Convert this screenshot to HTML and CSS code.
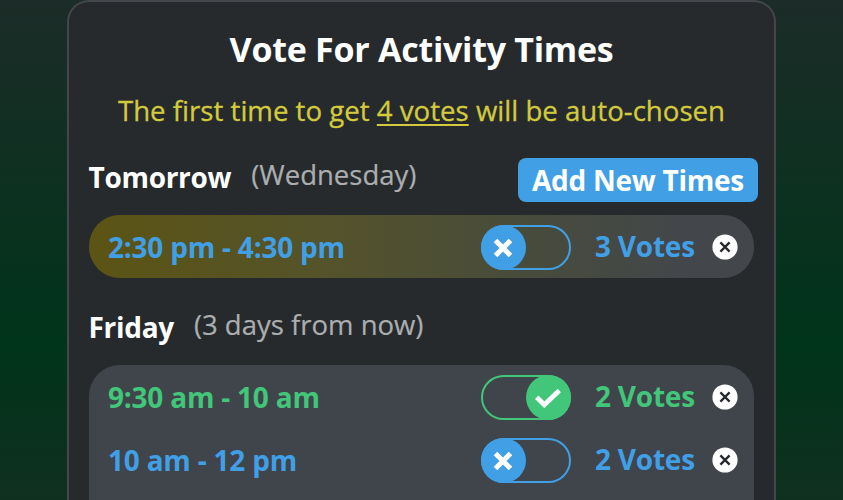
FILE: index.html
```html
<!DOCTYPE html>
<html lang="en">
<head>
<meta charset="utf-8">
<title>Vote For Activity Times</title>
<link rel="stylesheet" href="styles.css">
</head>
<body>
<svg class="defs" width="0" height="0" aria-hidden="true">
  <symbol id="cross" viewBox="0 0 20 20"><path d="M2.5 2.5 17.5 17.5M17.5 2.5 2.5 17.5" fill="none" stroke="currentColor" stroke-width="5"/></symbol>
  <symbol id="check" viewBox="0 0 26 20"><path d="M1.7 9.2 9.3 16.8 24.3 2.4" fill="none" stroke="currentColor" stroke-width="4.8"/></symbol>
  <symbol id="remove" viewBox="0 0 26 26"><circle cx="13" cy="13" r="12.6" fill="#fff"/><path d="M8.4 8.4 17.6 17.6M17.6 8.4 8.4 17.6" fill="none" stroke="#25282c" stroke-width="2.3"/></symbol>
</svg>
<main class="card">
  <h1 class="title">Vote For Activity Times</h1>
  <p class="hint">The first time to get <u>4 votes</u> will be auto-chosen</p>

  <section class="day">
    <header class="day-head">
      <h2>Tomorrow</h2><span class="when">(Wednesday)</span>
      <button class="add">Add New Times</button>
    </header>
    <div class="slots leading">
      <div class="slot">
        <span class="time">2:30 pm - 4:30 pm</span>
        <span class="toggle"><span class="knob"><svg class="cross"><use href="#cross"/></svg></span></span>
        <span class="votes">3 Votes</span>
        <svg class="remove"><use href="#remove"/></svg>
      </div>
    </div>
  </section>

  <section class="day later">
    <header class="day-head">
      <h2>Friday</h2><span class="when">(3 days from now)</span>
    </header>
    <div class="slots open">
      <div class="slot on">
        <span class="time">9:30 am - 10 am</span>
        <span class="toggle"><span class="knob"><svg class="check"><use href="#check"/></svg></span></span>
        <span class="votes">2 Votes</span>
        <svg class="remove"><use href="#remove"/></svg>
      </div>
      <div class="slot">
        <span class="time">10 am - 12 pm</span>
        <span class="toggle"><span class="knob"><svg class="cross"><use href="#cross"/></svg></span></span>
        <span class="votes">2 Votes</span>
        <svg class="remove"><use href="#remove"/></svg>
      </div>
    </div>
  </section>
</main>
</body>
</html>
```
FILE: styles.css
```css
* { box-sizing: border-box; }
body {
  margin: 0;
  height: 500px;
  overflow: hidden;
  background: linear-gradient(#1c2c28 0, #00341a 345px, #10301f 500px);
  font-family: "Open Sans", sans-serif;
  color: #fff;
}
.defs { display: none; }
.card {
  width: 709px;
  height: 500px;
  margin-left: 67px;
  padding: 24px 16px 0 20px;
  border: 2px solid #43474b;
  border-bottom: 0;
  border-radius: 22px 22px 0 0;
  background: #262a2d;
}
.title {
  margin: 0;
  padding-right: 4px;
  font-size: 34px;
  letter-spacing: -0.27px;
  line-height: 46px;
  font-weight: 700;
  text-align: center;
}
.hint {
  margin: 19px 0 0;
  padding-right: 4px;
  font-size: 27.64px;
  line-height: 38px;
  text-align: center;
  color: #d3ca3d;
  -webkit-text-stroke: 0.3px currentColor;
}
.hint u { text-decoration-thickness: 2px; text-underline-offset: 3px; }
.day-head {
  display: flex;
  align-items: flex-start;
  height: 86px;
  padding-top: 29px;
}
.day-head h2 {
  margin: 0 0 0 -0.5px;
  font-size: 28px;
  letter-spacing: -0.3px;
  line-height: 38px;
  font-weight: 700;
}
.when {
  margin: -2px 0 0 20px;
  font-size: 27.5px;
  line-height: 38px;
  color: #acaeaf;
  -webkit-text-stroke: 0.2px currentColor;
}
.later .day-head { height: 87px; padding-top: 30px; }
.add {
  width: 240px;
  height: 43.5px;
  margin-left: auto;
  padding: 0;
  border: 0;
  border-radius: 8px;
  background: #419fe6;
  color: #fff;
  font: 700 28px/42px "Open Sans", sans-serif;
  letter-spacing: -0.25px;
}
.slots {
  width: 665px;
  border-radius: 31px;
  background: #40444b;
}
.leading { background: linear-gradient(90deg, #5c5414, #54532a 35%, #474b3c 67%, #43474b 90%); }
.open { height: 135px; border-radius: 31px 31px 0 0; }
.slot {
  display: flex;
  align-items: center;
  height: 63px;
  padding: 0 16px 0 19px;
  font-size: 28px;
  letter-spacing: -0.22px;
  line-height: 38px;
  font-weight: 700;
  color: #419fe6;
}
.slot.on { color: #41c67a; }
.time { flex: 1; padding-top: 1px; }
.toggle {
  display: flex;
  width: 90.5px;
  height: 45.5px;
  margin-top: 2px;
  border: 2px solid currentColor;
  border-radius: 23px;
}
.on .toggle { justify-content: flex-end; }
.knob {
  display: flex;
  align-items: center;
  justify-content: center;
  width: 45.5px;
  height: 45.5px;
  margin: -2px;
  padding-top: 1px;
  border-radius: 50%;
  background: currentColor;
}
.cross { width: 20px; height: 20px; margin-right: 1px; color: #fff; }
.check { width: 26px; height: 20px; color: #fff; }
.votes { width: 117px; margin: -1px 0 0 24px; }
.remove { width: 26px; height: 26px; }
```
